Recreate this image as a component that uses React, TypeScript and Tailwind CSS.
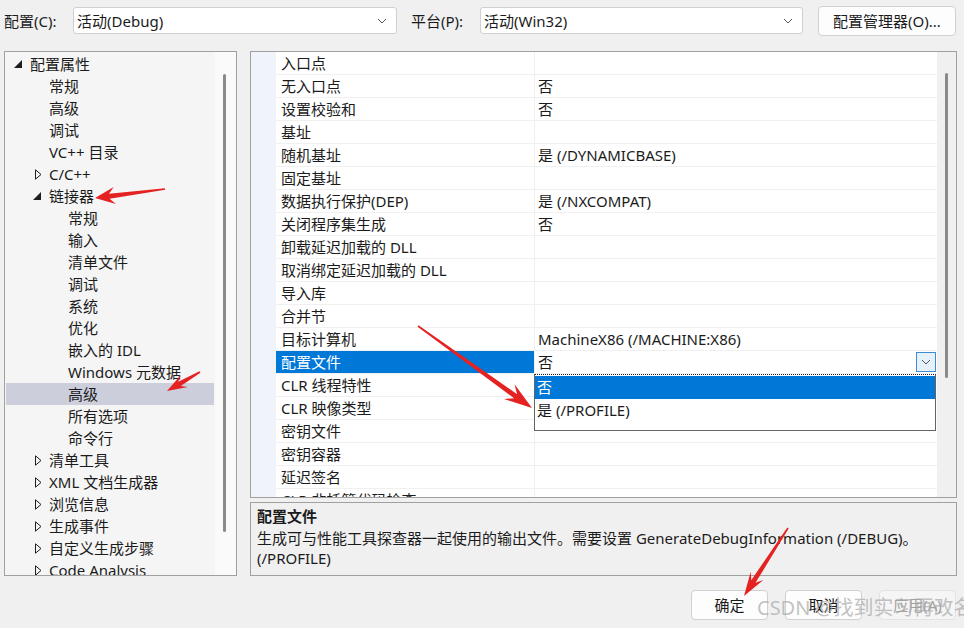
import React from "react";

type TreeItem = { label: string; level: 0 | 1 | 2; state?: "open" | "closed"; selected?: boolean };

const tree: TreeItem[] = [
  { label: "配置属性", level: 0, state: "open" },
  { label: "常规", level: 1 },
  { label: "高级", level: 1 },
  { label: "调试", level: 1 },
  { label: "VC++ 目录", level: 1 },
  { label: "C/C++", level: 1, state: "closed" },
  { label: "链接器", level: 1, state: "open" },
  { label: "常规", level: 2 },
  { label: "输入", level: 2 },
  { label: "清单文件", level: 2 },
  { label: "调试", level: 2 },
  { label: "系统", level: 2 },
  { label: "优化", level: 2 },
  { label: "嵌入的 IDL", level: 2 },
  { label: "Windows 元数据", level: 2 },
  { label: "高级", level: 2, selected: true },
  { label: "所有选项", level: 2 },
  { label: "命令行", level: 2 },
  { label: "清单工具", level: 1, state: "closed" },
  { label: "XML 文档生成器", level: 1, state: "closed" },
  { label: "浏览信息", level: 1, state: "closed" },
  { label: "生成事件", level: 1, state: "closed" },
  { label: "自定义生成步骤", level: 1, state: "closed" },
  { label: "Code Analysis", level: 1, state: "closed" },
];

const props: [string, string][] = [
  ["入口点", ""],
  ["无入口点", "否"],
  ["设置校验和", "否"],
  ["基址", ""],
  ["随机基址", "是 (/DYNAMICBASE)"],
  ["固定基址", ""],
  ["数据执行保护(DEP)", "是 (/NXCOMPAT)"],
  ["关闭程序集生成", "否"],
  ["卸载延迟加载的 DLL", ""],
  ["取消绑定延迟加载的 DLL", ""],
  ["导入库", ""],
  ["合并节", ""],
  ["目标计算机", "MachineX86 (/MACHINE:X86)"],
  ["配置文件", "否"],
  ["CLR 线程特性", ""],
  ["CLR 映像类型", ""],
  ["密钥文件", ""],
  ["密钥容器", ""],
  ["延迟签名", ""],
  ["CLR 非托管代码检查", ""],
];

const levelPad = { 0: "pl-[6px]", 1: "pl-[25px]", 2: "pl-[44px]" };

function Chevron() {
  return (
    <svg width="10" height="6" viewBox="0 0 10 6">
      <path d="M1 1 L5 5 L9 1" fill="none" stroke="#555" strokeWidth="1" />
    </svg>
  );
}

function Combo({ text, w }: { text: string; w: string }) {
  return (
    <div className={`${w} h-[27px] bg-white border border-[#d0d0d0] rounded-[3px] flex items-center pl-[3px] pr-[9px]`}>
      <span className="flex-1">{text}</span>
      <Chevron />
    </div>
  );
}

function Arrow({ x1, y1, x2, y2, head, width }: { x1: number; y1: number; x2: number; y2: number; head: number; width: number }) {
  const dx = x2 - x1;
  const dy = y2 - y1;
  const len = Math.hypot(dx, dy);
  const ux = dx / len;
  const uy = dy / len;
  const nx = -uy;
  const ny = ux;
  const bx = x2 - ux * head * 0.72;
  const by = y2 - uy * head * 0.72;
  const hx = x2 - ux * head;
  const hy = y2 - uy * head;
  const shaft = 5;
  const pts = [
    [x1 + nx * 0.8, y1 + ny * 0.8],
    [bx + (nx * shaft) / 2, by + (ny * shaft) / 2],
    [hx + (nx * width) / 2, hy + (ny * width) / 2],
    [x2, y2],
    [hx - (nx * width) / 2, hy - (ny * width) / 2],
    [bx - (nx * shaft) / 2, by - (ny * shaft) / 2],
    [x1 - nx * 0.8, y1 - ny * 0.8],
  ];
  return <polygon points={pts.map((p) => p.join(",")).join(" ")} fill="#e52222" />;
}

function Button({ text, disabled }: { text: string; disabled?: boolean }) {
  return (
    <div
      className={
        disabled
          ? "w-[77px] h-[30px] rounded-[4px] border border-[#e3e3e3] bg-[#f5f5f5] text-[#a0a0a0] flex items-center justify-center"
          : "w-[77px] h-[30px] rounded-[4px] border border-[#d0d0d0] bg-[#fdfdfd] flex items-center justify-center"
      }
    >
      {text}
    </div>
  );
}

export default function App() {
  return (
    <div className="relative w-[964px] h-[628px] overflow-hidden bg-[#f0f0f0] text-[15px] text-[#1b1b1b] font-['Noto_Sans','Noto_Sans_CJK_SC',sans-serif] leading-[22px]">
      {/* top bar */}
      <div className="h-[41px] flex items-center pl-[4px]">
        <span className="w-[69px]">配置(C):</span>
        <Combo text="活动(Debug)" w="w-[324px]" />
        <span className="w-[69px] ml-[14px]">平台(P):</span>
        <Combo text="活动(Win32)" w="w-[323px]" />
        <div className="ml-[15px] w-[138px] h-[30px] rounded-[4px] border border-[#d0d0d0] bg-[#fdfdfd] flex items-center justify-center">
          配置管理器(O)...
        </div>
      </div>

      <div className="mt-[10px] flex pl-[4px] h-[525px]">
        {/* tree */}
        <div className="w-[233px] h-full border border-[#a0a0a0] bg-[#f5f5f5] flex overflow-hidden">
          <div className="flex-1 pt-[1px] overflow-hidden">
            {tree.map((t, i) => (
              <div
                key={i}
                className={`h-[22px] mx-[1px] flex items-center ${levelPad[t.level]} ${t.selected ? "bg-[#cccedb]" : ""}`}
              >
                <div className="w-[18px] h-[22px] flex items-center pl-[2px]">
                  {t.state === "open" && (
                    <svg width="8" height="8" viewBox="0 0 8 8">
                      <polygon points="8,0 8,8 0,8" fill="#1e1e1e" />
                    </svg>
                  )}
                  {t.state === "closed" && (
                    <svg width="9" height="11" viewBox="0 0 9 11">
                      <polygon points="2.5,0.8 8,5.5 2.5,10.2" fill="none" stroke="#1e1e1e" strokeWidth="1" />
                    </svg>
                  )}
                </div>
                <span className="whitespace-nowrap">{t.label}</span>
              </div>
            ))}
          </div>
          <div className="w-[21px] h-full bg-[#fafafa] pt-[22px] pl-[8px]">
            <div className="w-[3px] h-[458px] rounded-full bg-[#8a8a8a]" />
          </div>
        </div>

        {/* right column */}
        <div className="ml-[13px] w-[707px] h-full flex flex-col">
          <div className="h-[447px] border border-[#a0a0a0] bg-white flex overflow-hidden">
            <div className="flex-1 overflow-hidden">
              {props.map(([name, value], i) => {
                const sel = i === 13;
                return (
                  <div key={i} className="flex h-[23px]">
                    <div className="w-[25px] bg-[#f0f3fa]" />
                    <div
                      className={`w-[258px] pl-[5px] border-b border-[#f0f0f0] whitespace-nowrap ${sel ? "bg-[#0078d7] text-white border-[#0078d7]" : ""}`}
                    >
                      {name}
                    </div>
                    <div className="flex-1 border-l border-b border-[#f0f0f0] pl-[3px] flex items-start whitespace-nowrap">
                      <span className="flex-1">{value}</span>
                      {sel && (
                        <div className="mt-[1px] mr-[1px] w-[20px] h-[20px] bg-[#e5f1fb] border border-[#3d8bd6] flex items-center justify-center">
                          <Chevron />
                        </div>
                      )}
                    </div>
                  </div>
                );
              })}
            </div>
            <div className="w-[19px] h-full bg-[#f0f0f0] pt-[21px] pl-[8px]">
              <div className="w-[3px] h-[305px] rounded-full bg-[#8a8a8a]" />
            </div>
          </div>

          <div className="mt-[4px] h-[74px] border border-[#a0a0a0] bg-[#f0f0f0] pl-[6px] pt-[2px]">
            <div className="font-bold leading-[22px]">配置文件</div>
            <div className="mt-[1px] leading-[20px] whitespace-nowrap">
              生成可与性能工具探查器一起使用的输出文件。需要设置 GenerateDebugInformation (/DEBUG)。
            </div>
            <div className="leading-[20px]">(/PROFILE)</div>
          </div>
        </div>
      </div>

      {/* bottom buttons */}
      <div className="mt-[14px] flex justify-end gap-[17px] pr-[8px]">
        <Button text="确定" />
        <Button text="取消" />
        <Button text="应用(A)" disabled />
      </div>

      {/* open dropdown list */}
      <div className="absolute left-[534px] top-[374px] w-[402px] h-[57px] bg-white border border-[#646464] border-t-[#202020] [border-top-style:dotted]">
        <div className="h-[23px] mt-[1px] bg-[#0078d7] text-white pl-[2px]">否</div>
        <div className="h-[23px] pl-[2px]">是 (/PROFILE)</div>
      </div>

      {/* annotation arrows */}
      <svg className="absolute inset-0 pointer-events-none" width="964" height="628">
        <Arrow x1={165} y1={189} x2={95} y2={198} head={20} width={17} />
        <Arrow x1={200} y1={372} x2={167} y2={391} head={20} width={14} />
        <Arrow x1={418} y1={326} x2={532} y2={408} head={28} width={18} />
        <Arrow x1={788} y1={528} x2={744} y2={596} head={24} width={15} />
      </svg>

      {/* watermark */}
      <div className="absolute left-[757px] top-[596px] text-[20px] leading-[24px] text-[#a8a8a8]/70 whitespace-nowrap pointer-events-none">
        CSDN @找到实习再改名
      </div>
    </div>
  );
}
